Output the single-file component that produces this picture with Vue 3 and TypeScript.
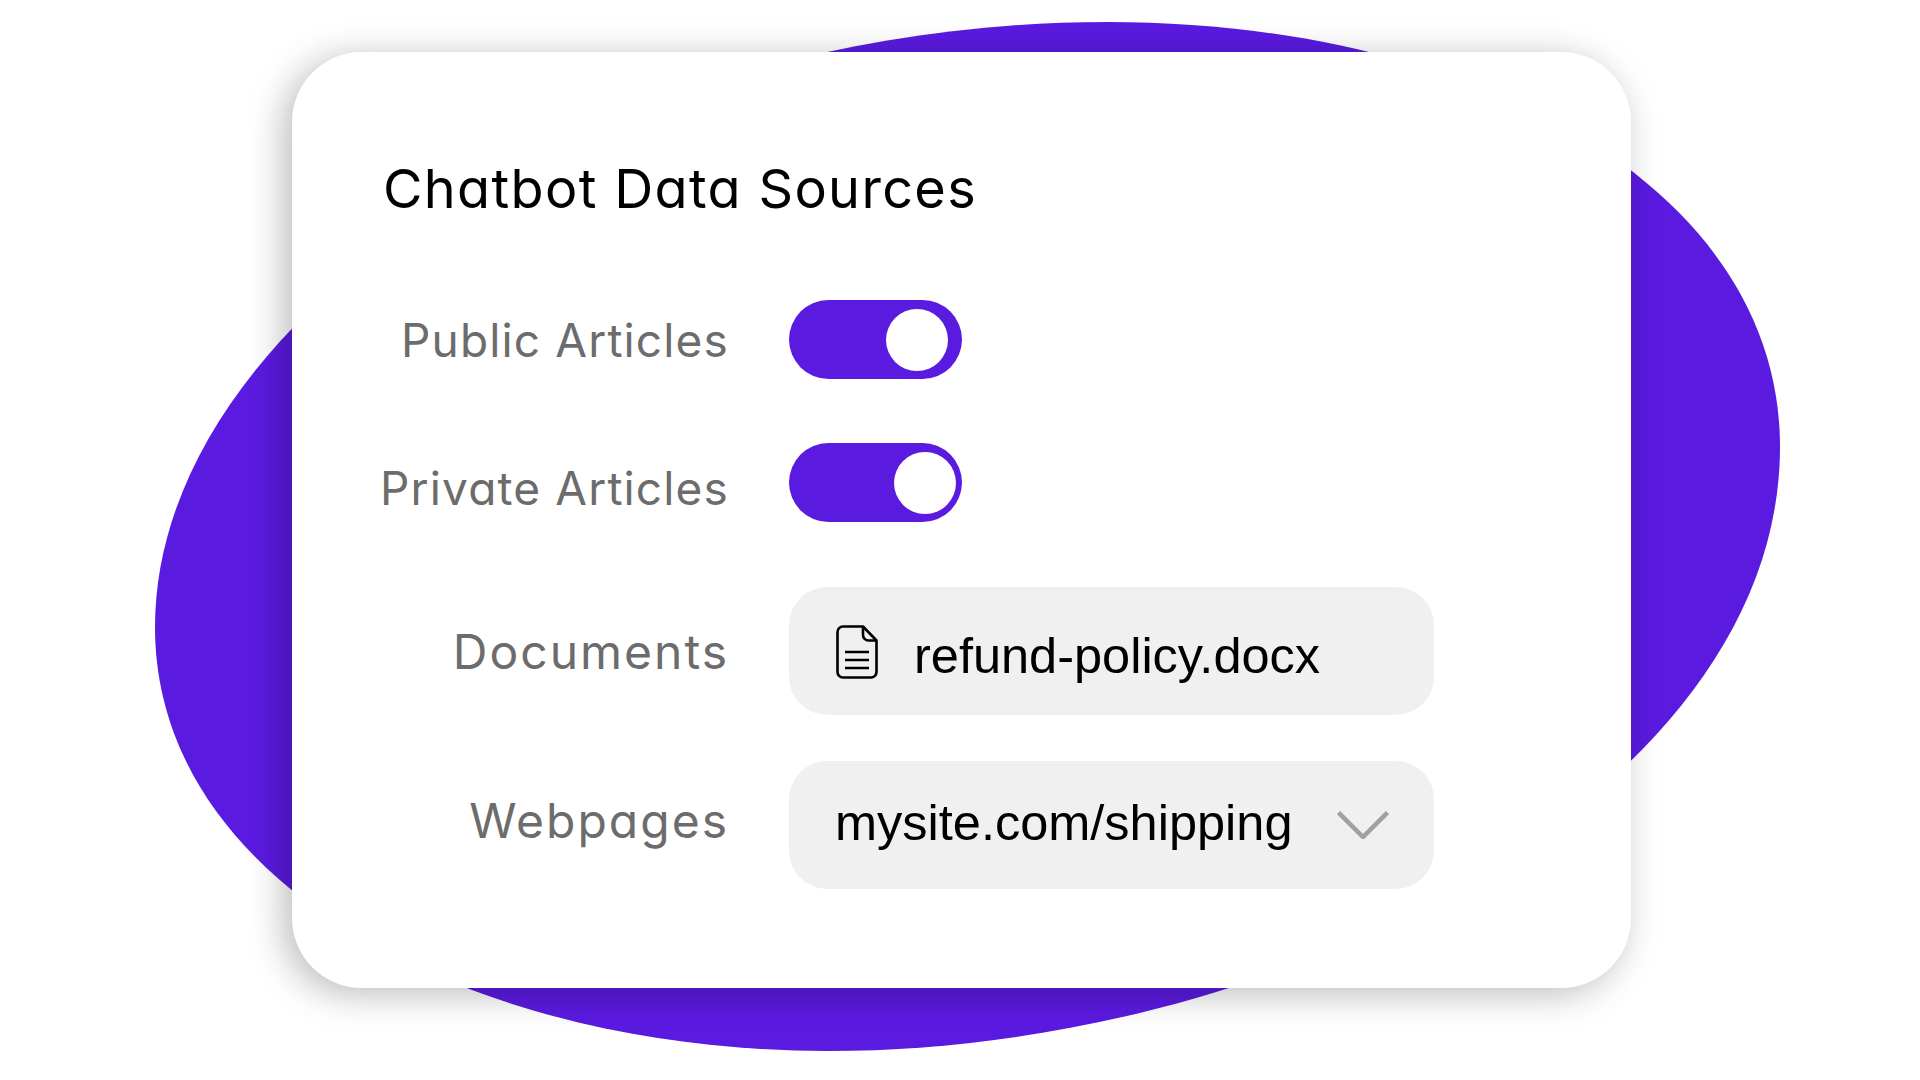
<script setup lang="ts">
const toggles = [
  { label: "Public Articles", cls: "knob-a", labelCls: "" },
  { label: "Private Articles", cls: "knob-b", labelCls: "label-low" },
];
</script>

<template>
  <div class="page">
    <svg class="blob" viewBox="0 0 1920 1080" width="1920" height="1080">
      <path
        d="M1108 22 C1480 22 1780 190 1780 447 C1780 790 1290 1051 827 1051 C480 1051 155 890 155 627 C155 315 600 22 1108 22 Z"
        fill="#5b1ae0"
      />
    </svg>
    <div class="card">
      <h1 class="title">Chatbot Data Sources</h1>
      <div class="toggles">
        <div v-for="t in toggles" :key="t.label" class="row">
          <span class="label" :class="t.labelCls">{{ t.label }}</span>
          <div class="toggle">
            <span class="knob" :class="t.cls"></span>
          </div>
        </div>
      </div>
      <div class="fields">
        <div class="row">
          <span class="label label-wide label-doc">Documents</span>
          <div class="field">
            <svg class="doc" viewBox="0 0 42 54" width="42" height="54" fill="none" stroke="#000" stroke-width="2.6">
              <path d="M27 1.5H7a5.500 5.500 0 0 0-5.500 5.500V47a5.500 5.500 0 0 0 5.500 5.500H35a5.500 5.500 0 0 0 5.500-5.500V15.500Z" stroke-linejoin="round" />
              <path d="M27 1.500V10a5.500 5.500 0 0 0 5.500 5.500H40.500" stroke-linejoin="round" />
              <path d="M9 27H33M9 35H33M9 43H33" />
            </svg>
            <span class="value value-doc">refund-policy.docx</span>
          </div>
        </div>
        <div class="row">
          <span class="label label-wide label-high">Webpages</span>
          <div class="field">
            <span class="value value-url">mysite.com/shipping</span>
            <svg class="chevron" viewBox="0 0 52 28" width="52" height="28" fill="none" stroke="#a0a0a0" stroke-width="4.500">
              <path d="M1.500 1.500L26 26L50.500 1.500" />
            </svg>
          </div>
        </div>
      </div>
    </div>
  </div>
</template>

<style>
html,
body {
  margin: 0;
  background: #fff;
}
</style>

<style scoped>
.page {
  position: relative;
  width: 1920px;
  height: 1080px;
  overflow: hidden;
  background: #fff;
  padding: 52px 0 0 292px;
  box-sizing: border-box;
}

.blob {
  position: absolute;
  left: 0;
  top: 0;
}

.card {
  position: relative;
  width: 1339px;
  height: 936px;
  box-sizing: border-box;
  padding: 107px 0 0 91px;
  background: #fff;
  border-radius: 70px;
  box-shadow: -8px 6px 36px rgba(0, 0, 0, 0.27);
}

.title {
  margin: 0;
  height: 60px;
  font: 400 54px/60px Inter, "Liberation Sans", sans-serif;
  font-feature-settings: "cv11";
  letter-spacing: 1.35px;
  color: #000;
  white-space: nowrap;
}

.toggles {
  display: flex;
  flex-direction: column;
  gap: 64px;
  margin-top: 81px;
}

.fields {
  display: flex;
  flex-direction: column;
  gap: 46px;
  margin-top: 65px;
}

.row {
  display: flex;
  align-items: center;
  gap: 60px;
  margin-left: -91px;
}

.label {
  width: 437px;
  text-align: right;
  font: 400 46px/52px Inter, "Liberation Sans", sans-serif;
  font-feature-settings: "cv11";
  letter-spacing: 1.15px;
  color: #6c6c6c;
  white-space: nowrap;
}

.label-wide {
  font-size: 48px;
  letter-spacing: 2px;
}

.label-low {
  margin-top: 10px;
}

.label-doc {
  margin-top: 2px;
}

.label-high {
  margin-bottom: 8px;
}

.toggle {
  position: relative;
  width: 173px;
  height: 79px;
  border-radius: 40px;
  background: #5b1ae0;
}

.knob {
  position: absolute;
  top: 9px;
  width: 62px;
  height: 62px;
  border-radius: 50%;
  background: #fff;
}

.knob-a {
  left: 97px;
}

.knob-b {
  left: 105px;
}

.field {
  display: flex;
  align-items: center;
  width: 645px;
  height: 128px;
  box-sizing: border-box;
  padding: 0 45px 0 47px;
  border-radius: 38px;
  background: #f0f0f0;
}

.doc {
  flex: none;
  margin-right: 36px;
  margin-top: 2px;
}

.value {
  font: 400 50.5px/56px "Liberation Sans", Arial, sans-serif;
  color: #000;
  white-space: nowrap;
}

.value-doc {
  margin-top: 10px;
}

.value-url {
  margin-bottom: 4px;
  margin-left: -1px;
}

.chevron {
  flex: none;
  margin-left: auto;
}
</style>
